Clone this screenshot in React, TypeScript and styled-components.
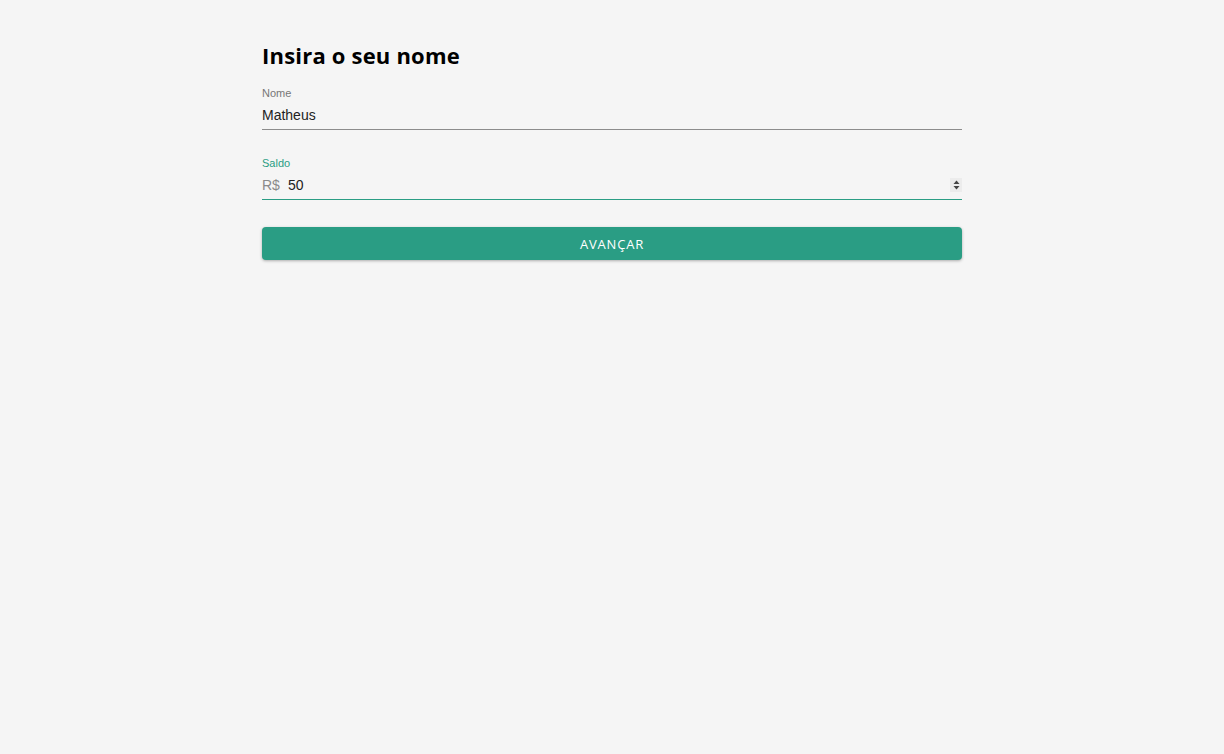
import React from "react";
import styled, { createGlobalStyle } from "styled-components";

const Global = createGlobalStyle`
  html, body { margin: 0; padding: 0; background: #f5f5f5; }
  body { font-family: "Liberation Sans", Arial, sans-serif; }
`;

const Page = styled.div`
  min-height: 754px;
  background: #f5f5f5;
  display: flex;
  justify-content: center;
`;

const Form = styled.form`
  width: 700px;
  padding-top: 40px;
  display: flex;
  flex-direction: column;
`;

const Title = styled.h1`
  margin: 0 0 17px 0;
  font-family: "Open Sans", sans-serif;
  font-weight: 700;
  font-size: 22px;
  line-height: 30px;
  letter-spacing: 0.2px;
  color: #000;
`;

const Field = styled.div`
  display: flex;
  flex-direction: column;
  margin-bottom: 27px;
`;

const Label = styled.label<{ $active?: boolean }>`
  font-family: "Liberation Sans", Arial, sans-serif;
  font-size: 11px;
  line-height: 13px;
  color: ${(p) => (p.$active ? "#2a9d84" : "#777777")};
  margin-bottom: 2px;
`;

const InputRow = styled.div<{ $active?: boolean }>`
  display: flex;
  align-items: center;
  height: 25px;
  padding-bottom: 2px;
  border-bottom: 1px solid ${(p) => (p.$active ? "#2a9d84" : "#8c8c8c")};
`;

const Prefix = styled.span`
  font-size: 14px;
  color: #8a8a8a;
  margin-right: 8px;
`;

const Input = styled.input`
  flex: 1;
  border: none;
  outline: none;
  background: transparent;
  padding: 0;
  font-family: "Liberation Sans", Arial, sans-serif;
  font-size: 14px;
  color: #222;
  caret-color: #000;
`;

const Spinner = styled.span`
  width: 12px;
  height: 14px;
  background: #ececec;
  display: flex;
  align-items: center;
  justify-content: center;
`;

const Button = styled.button`
  height: 33px;
  border: none;
  border-radius: 4px;
  background: #2a9d84;
  color: #fff;
  font-family: "Open Sans", sans-serif;
  font-size: 13px;
  letter-spacing: 0.8px;
  text-transform: uppercase;
  box-shadow: 0 1px 3px rgba(0, 0, 0, 0.3);
  cursor: pointer;
`;

export default function App() {
  return (
    <Page>
      <Global />
      <Form onSubmit={(e) => e.preventDefault()}>
        <Title>Insira o seu nome</Title>
        <Field>
          <Label>Nome</Label>
          <InputRow>
            <Input defaultValue="Matheus" />
          </InputRow>
        </Field>
        <Field>
          <Label $active>Saldo</Label>
          <InputRow $active>
            <Prefix>R$</Prefix>
            <Input defaultValue="50" autoFocus />
            <Spinner>
              <svg width="7" height="10" viewBox="0 0 7 10">
                <path d="M3.5 0.5 L6.5 4 L0.5 4 Z" fill="#444" />
                <path d="M3.5 9.5 L6.5 6 L0.5 6 Z" fill="#444" />
              </svg>
            </Spinner>
          </InputRow>
        </Field>
        <Button type="submit">Avançar</Button>
      </Form>
    </Page>
  );
}
